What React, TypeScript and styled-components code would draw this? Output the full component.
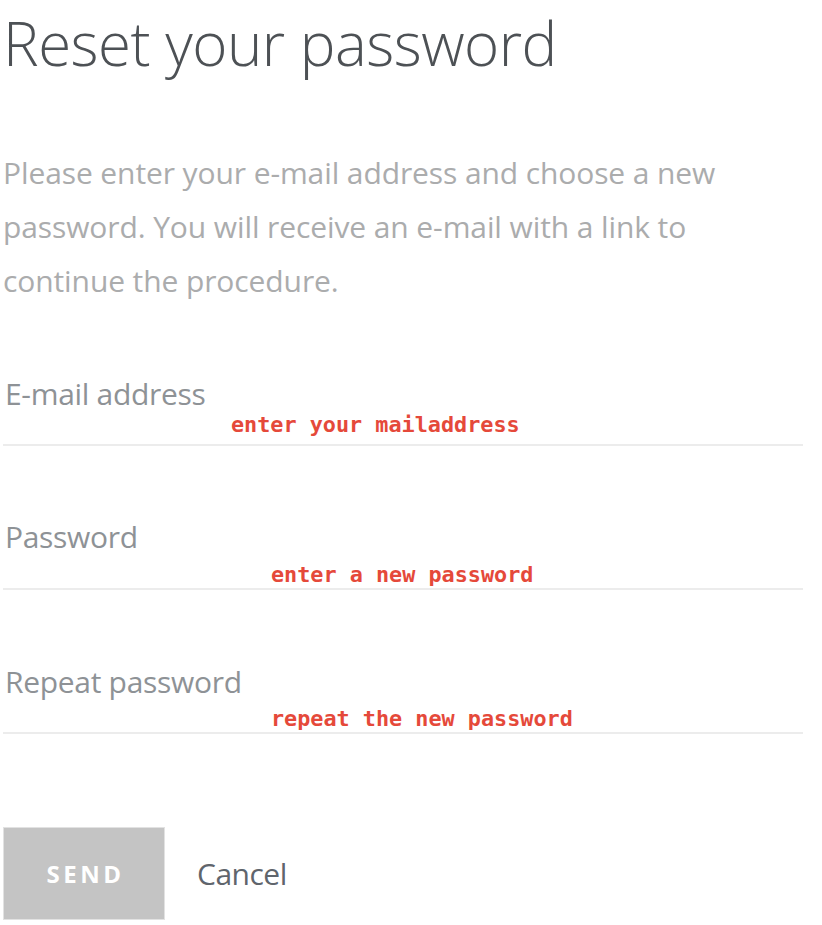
import React from 'react';
import styled, { createGlobalStyle } from 'styled-components';

const GlobalStyle = createGlobalStyle`
  body {
    margin: 0;
    background: #fff;
    font-family: "Open Sans", "Noto Sans", sans-serif;
  }
`

// hintDrop: how far the hint sits below its usual place, nearer the rule
const fields = [
  { label: 'E-mail address', hint: 'enter your mailaddress', indent: 228, hintDrop: 0 },
  { label: 'Password', hint: 'enter a new password', indent: 268, hintDrop: 7 },
  { label: 'Repeat password', hint: 'repeat the new password', indent: 268, hintDrop: 6 },
]

export default function App() {
  return (
    <Page>
      <GlobalStyle />
      <Title>Reset your password</Title>
      <Intro>
        Please enter your e-mail address and choose a new password. You will receive an e-mail with a link to continue the procedure.
      </Intro>
      <Form>
        {fields.map(f => (
          <Field key={f.label} $drop={f.hintDrop}>
            <Label $drop={f.hintDrop}>{f.label}</Label>
            <Hint $indent={f.indent}>{f.hint}</Hint>
          </Field>
        ))}
      </Form>
      <Actions>
        <SendButton>SEND</SendButton>
        <CancelLink>Cancel</CancelLink>
      </Actions>
    </Page>
  )
}

const Page = styled.div`
  width: 800px;
  padding: 0 0 0 3px;
  display: flex;
  flex-direction: column;
`
const Title = styled.h1`
  margin: 3px 0 0 0;
  font-weight: 300;
  font-size: 60px;
  line-height: 80px;
  color: #4d5155;
  letter-spacing: -0.5px;
`
const Intro = styled.p`
  margin: 63px 0 0 0;
  width: 740px;
  font-size: 30px;
  line-height: 54px;
  color: #abacad;
  letter-spacing: -0.1px;
`
const Form = styled.div`
  display: flex;
  flex-direction: column;
`
const Field = styled.div<{ $drop: number }>`
  height: 144px;
  display: flex;
  flex-direction: column;
  justify-content: flex-end;
  box-sizing: border-box;
  padding-bottom: ${p => 6 - p.$drop}px;
  border-bottom: 2px solid #ececec;
  &:first-child { height: 138px; }
`
const Label = styled.div<{ $drop: number }>`
  margin-bottom: ${p => p.$drop}px;
  font-size: 30px;
  line-height: 36px;
  color: #8e9296;
  letter-spacing: -0.3px;
  padding-left: 2px;
`
const Hint = styled.div<{ $indent: number }>`
  padding-left: ${p => p.$indent}px;
  font-family: "DejaVu Sans Mono", "Liberation Mono", monospace;
  font-weight: 700;
  font-size: 21.8px;
  line-height: 26px;
  color: #e5493a;
`
const Actions = styled.div`
  margin-top: 93px;
  display: flex;
  align-items: center;
  gap: 32px;
`
const SendButton = styled.button`
  width: 162px;
  height: 93px;
  border: 1px solid #e2e2e2;
  background: #c4c4c4;
  color: #fff;
  font-family: "Open Sans", "Noto Sans", sans-serif;
  font-weight: 700;
  font-size: 24px;
  letter-spacing: 3.5px;
  padding: 0 0 0 3px;
`
const CancelLink = styled.span`
  font-size: 30px;
  color: #5f656c;
  letter-spacing: -0.5px;
`
